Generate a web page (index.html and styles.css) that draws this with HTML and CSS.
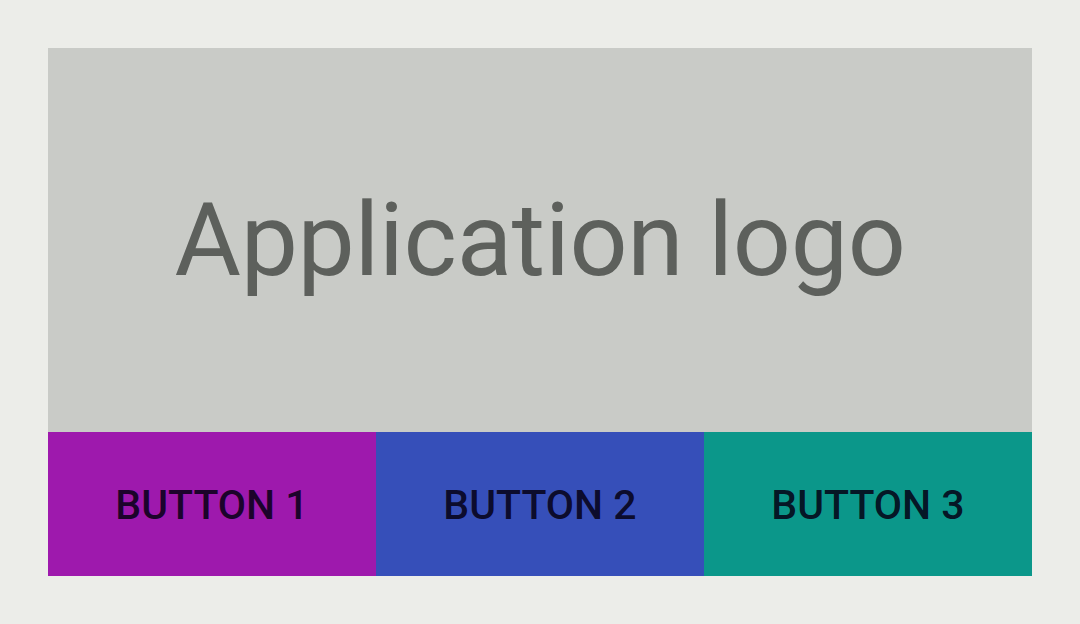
FILE: index.html
```html
<!DOCTYPE html>
<html>
<head>
<meta charset="utf-8">
<link rel="stylesheet" href="styles.css">
</head>
<body>
<div class="card">
  <div class="logo">Application logo</div>
  <div class="buttons">
    <div class="btn b1">BUTTON 1</div>
    <div class="btn b2">BUTTON 2</div>
    <div class="btn b3">BUTTON 3</div>
  </div>
</div>
</body>
</html>
```
FILE: styles.css
```css
html, body {
  margin: 0;
  padding: 0;
  background: #ecede9;
}
body {
  padding: 48px;
  font-family: Roboto, "Noto Sans", sans-serif;
}
.card {
  width: 984px;
  height: 528px;
  display: flex;
  flex-direction: column;
}
.logo {
  height: 384px;
  background: #c9cbc7;
  color: #5d605c;
  display: flex;
  align-items: center;
  justify-content: center;
  font-size: 102px;
  font-weight: 400;
  letter-spacing: -0.3px;
}
.buttons {
  display: flex;
  height: 144px;
}
.btn {
  flex: 1;
  display: flex;
  align-items: center;
  justify-content: center;
  padding-top: 2px;
  font-size: 41px;
  font-weight: 500;
  color: rgba(5, 0, 20, 0.87);
}
.b1 { background: #9e19ad; }
.b2 { background: #364fb9; }
.b3 { background: #0b978a; }
```
